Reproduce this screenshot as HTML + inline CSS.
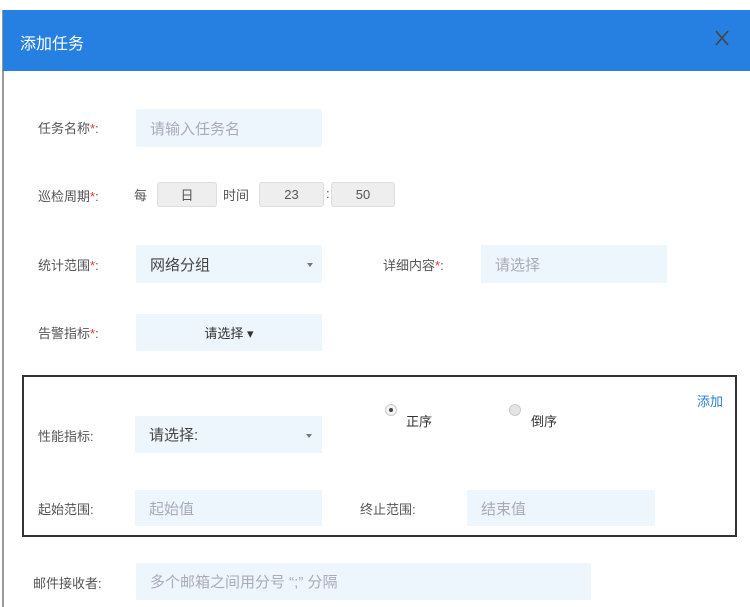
<!DOCTYPE html>
<html><head><meta charset="utf-8"><style>
*{margin:0;padding:0;box-sizing:border-box}
body{width:750px;height:607px;background:#fff;position:relative;overflow:hidden;font-family:"Liberation Sans","Noto Sans CJK SC",sans-serif;color:#555;font-size:13px}
.a{position:absolute;white-space:nowrap}
.hdr{left:3px;top:10px;width:747px;height:61px;background:#2680e1}
.lbl{font-size:13px;color:#555}
.req{color:#e33}
.inp{position:absolute;background:#edf5fd;font-size:15px;color:#aab;padding-left:14px;display:flex;align-items:center}
.box{position:absolute;background:#eee;border:1px solid #ddd;border-radius:3px;font-size:13px;color:#555;display:flex;align-items:center;justify-content:center}
.arr{position:absolute;width:0;height:0;border-left:3px solid transparent;border-right:3px solid transparent;border-top:4px solid #777}
.radio{position:absolute;width:12px;height:12px;border-radius:50%;background:#e4e4e4;border:1px solid #ccc}
</style></head><body>
<div class="a" style="left:2px;top:10px;width:2px;height:597px;background:#999"></div>
<div class="a hdr"></div>
<div class="a" style="left:20px;top:30px;font-size:16px;color:#fff">添加任务</div>
<svg class="a" style="left:715px;top:30px" width="14" height="16"><path d="M1 1L13 15M13 1L1 15" stroke="#444" stroke-width="1.6" fill="none"/></svg>

<div class="a lbl" style="left:38px;top:118px">任务名称<span class="req">*</span>:</div>
<div class="inp" style="left:136px;top:109px;width:186px;height:38px">请输入任务名</div>

<div class="a lbl" style="left:38px;top:186px">巡检周期<span class="req">*</span>:</div>
<div class="a lbl" style="left:134px;top:185px">每</div>
<div class="box" style="left:157px;top:182px;width:60px;height:25px">日</div>
<div class="a lbl" style="left:223px;top:185px">时间</div>
<div class="box" style="left:259px;top:182px;width:65px;height:25px">23</div>
<div class="a lbl" style="left:326px;top:186px">:</div>
<div class="box" style="left:331px;top:182px;width:64px;height:25px">50</div>

<div class="a lbl" style="left:38px;top:255px">统计范围<span class="req">*</span>:</div>
<div class="inp" style="left:136px;top:245px;width:186px;height:38px;color:#444">网络分组</div>
<div class="arr" style="left:307px;top:263px"></div>
<div class="a lbl" style="left:383px;top:255px">详细内容<span class="req">*</span>:</div>
<div class="inp" style="left:481px;top:245px;width:186px;height:38px">请选择</div>

<div class="a lbl" style="left:38px;top:323px">告警指标<span class="req">*</span>:</div>
<div class="inp" style="left:136px;top:314px;width:186px;height:37px;font-size:13px;color:#333;justify-content:center;padding:0">请选择 ▾</div>

<div class="a" style="left:22px;top:375px;width:715px;height:162px;border:2px solid #333"></div>
<div class="a" style="left:697px;top:391px;font-size:13px;color:#2a7fcf">添加</div>
<div class="a lbl" style="left:38px;top:426px">性能指标:</div>
<div class="inp" style="left:135px;top:416px;width:187px;height:37px;color:#444">请选择:</div>
<div class="arr" style="left:306px;top:434px"></div>
<div class="radio" style="left:385px;top:404px;background:#f4f4f4"></div>
<div class="a" style="left:389px;top:408px;width:4px;height:4px;border-radius:50%;background:#444"></div>
<div class="a lbl" style="left:406px;top:411px;color:#333">正序</div>
<div class="radio" style="left:509px;top:404px"></div>
<div class="a lbl" style="left:531px;top:411px;color:#333">倒序</div>

<div class="a lbl" style="left:38px;top:499px">起始范围:</div>
<div class="inp" style="left:135px;top:490px;width:187px;height:36px">起始值</div>
<div class="a lbl" style="left:360px;top:499px">终止范围:</div>
<div class="inp" style="left:467px;top:490px;width:188px;height:36px">结束值</div>

<div class="a lbl" style="left:33px;top:573px">邮件接收者:</div>
<div class="inp" style="left:136px;top:563px;width:455px;height:37px">多个邮箱之间用分号 “;” 分隔</div>
</body></html>
